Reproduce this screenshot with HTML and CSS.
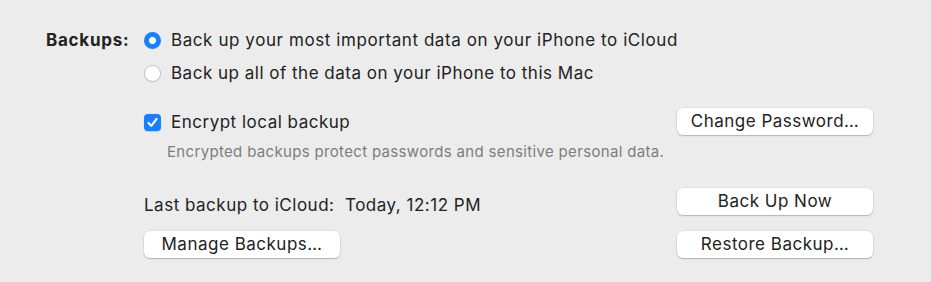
FILE: index.html
```html
<!DOCTYPE html>
<html>
<head>
<meta charset="utf-8">
<link rel="stylesheet" href="styles.css">
</head>
<body>
<div class="pane">
  <div class="label">Backups:</div>
  <div class="content">
    <div class="row r1">
      <span class="radio on"></span>
      <span class="opt">Back up your most important data on your iPhone to iCloud</span>
    </div>
    <div class="row r2">
      <span class="radio"></span>
      <span class="opt">Back up all of the data on your iPhone to this Mac</span>
    </div>
    <div class="row r3 split">
      <div class="lhs">
        <span class="check"><svg width="13" height="13" viewBox="0 0 12 12"><path d="M2.3 6.4 L4.9 9.1 L9.8 2.7" fill="none" stroke="#fff" stroke-width="1.9" stroke-linecap="round" stroke-linejoin="round"/></svg></span>
        <span class="opt">Encrypt local backup</span>
      </div>
      <button class="btn">Change Password…</button>
    </div>
    <div class="row r4">
      <span class="note">Encrypted backups protect passwords and sensitive personal data.</span>
    </div>
    <div class="row r5 split">
      <span class="last">Last backup to iCloud:&nbsp; Today, 12:12 PM</span>
      <button class="btn">Back Up Now</button>
    </div>
    <div class="row r6 split">
      <button class="btn">Manage Backups…</button>
      <button class="btn">Restore Backup…</button>
    </div>
  </div>
</div>
</body>
</html>
```
FILE: styles.css
```css
html, body {
  margin: 0;
  padding: 0;
  background: #ececec;
}
body {
  width: 931px;
  height: 282px;
  overflow: hidden;
  font-family: "Inter", "Liberation Sans", sans-serif;
  color: #222;
  font-size: 17px;
  letter-spacing: 0.5px;
}
.pane {
  display: flex;
  padding: 28px 0 0 46px;
}
.label {
  width: 97px;
  font-weight: 700;
  line-height: 24px;
  font-size: 17px;
  letter-spacing: 0.75px;
}
.content {
  width: 730px;
  display: flex;
  flex-direction: column;
}
.row {
  display: flex;
  align-items: center;
}
.split {
  justify-content: space-between;
}
.lhs {
  display: flex;
  align-items: center;
}
.r1 { height: 24px; }
.r1 .opt { letter-spacing: 0.58px; }
.r2 { height: 24px; margin-top: 9px; }
.r3 { height: 28px; margin-top: 23px; }
.r4 { height: 16px; margin-top: 7px; padding-left: 24px; }
.r5 { height: 28px; margin-top: 29px; }
.r6 { height: 28px; margin-top: 15px; }
.radio {
  width: 17px;
  height: 17px;
  margin-left: 1px;
  margin-right: 10px;
  border-radius: 50%;
  box-sizing: border-box;
  background: #fff;
  border: 1px solid #c2c2c2;
  box-shadow: 0 0.5px 1px rgba(0,0,0,0.12);
  flex: none;
}
.radio.on {
  border: none;
  background: radial-gradient(circle, #fff 0 3.2px, #1b7ff9 3.8px);
  box-shadow: 0 0.5px 1px rgba(0,0,0,0.15);
}
.check {
  width: 17px;
  height: 17px;
  margin-left: 1px;
  margin-right: 10px;
  border-radius: 4px;
  background: #1b7ff9;
  display: flex;
  align-items: center;
  justify-content: center;
  flex: none;
  box-shadow: 0 0.5px 1px rgba(0,0,0,0.15);
}
.check svg { display: block; }
.opt { white-space: nowrap; }
.note {
  font-size: 15px;
  letter-spacing: 0.33px;
  color: #7d7d7d;
  white-space: nowrap;
}
.last {
  padding-left: 1px;
  position: relative;
  top: 3px;
  white-space: nowrap;
}
.btn {
  width: 196px;
  height: 27px;
  margin: 0;
  padding: 0 0 1px;
  border: none;
  border-radius: 6px;
  background: #fff;
  color: #222;
  font-family: inherit;
  font-size: 17px;
  letter-spacing: 0.5px;
  box-shadow: 0 0 0 0.5px rgba(0,0,0,0.08), 0 1px 1.5px rgba(0,0,0,0.22);
  align-self: flex-start;
}
.r6 .btn:first-child { margin-left: 1px; }
```
